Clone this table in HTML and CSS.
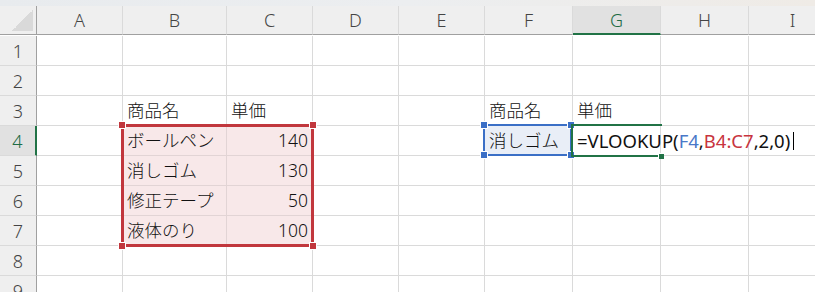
FILE: index.html
```html
<!DOCTYPE html>
<html lang="ja">
<head>
  <meta charset="UTF-8">
  <title>VLOOKUP</title>
  <link rel="stylesheet" href="styles.css">
</head>
<body>
  <div class="sheet">
    <div class="topbar"></div>

    <div class="grid">
      <!-- 列見出し -->
      <div class="corner"><span class="corner-tri"></span></div>
      <div class="colhead">A</div>
      <div class="colhead">B</div>
      <div class="colhead">C</div>
      <div class="colhead">D</div>
      <div class="colhead">E</div>
      <div class="colhead">F</div>
      <div class="colhead current">G</div>
      <div class="colhead">H</div>
      <div class="colhead">I</div>

      <!-- 1 -->
      <div class="rowhead">1</div>
      <div class="cell"></div><div class="cell"></div><div class="cell"></div><div class="cell"></div>
      <div class="cell"></div><div class="cell"></div><div class="cell"></div><div class="cell"></div><div class="cell"></div>

      <!-- 2 -->
      <div class="rowhead">2</div>
      <div class="cell"></div><div class="cell"></div><div class="cell"></div><div class="cell"></div>
      <div class="cell"></div><div class="cell"></div><div class="cell"></div><div class="cell"></div><div class="cell"></div>

      <!-- 3 -->
      <div class="rowhead">3</div>
      <div class="cell"></div>
      <div class="cell">商品名</div>
      <div class="cell">単価</div>
      <div class="cell"></div>
      <div class="cell"></div>
      <div class="cell">商品名</div>
      <div class="cell">単価</div>
      <div class="cell"></div>
      <div class="cell"></div>

      <!-- 4 -->
      <div class="rowhead current">4</div>
      <div class="cell"></div>
      <div class="cell ref-red">ボールペン</div>
      <div class="cell ref-red num">140</div>
      <div class="cell"></div>
      <div class="cell"></div>
      <div class="cell ref-blue">消しゴム</div>
      <div class="cell editing">=VLOOKUP(<span class="c-blue">F4</span>,<span class="c-red">B4:C7</span>,2,0)</div>
      <div class="cell"></div>
      <div class="cell"></div>

      <!-- 5 -->
      <div class="rowhead">5</div>
      <div class="cell"></div>
      <div class="cell ref-red">消しゴム</div>
      <div class="cell ref-red num">130</div>
      <div class="cell"></div><div class="cell"></div><div class="cell"></div>
      <div class="cell"></div><div class="cell"></div><div class="cell"></div>

      <!-- 6 -->
      <div class="rowhead">6</div>
      <div class="cell"></div>
      <div class="cell ref-red">修正テープ</div>
      <div class="cell ref-red num">50</div>
      <div class="cell"></div><div class="cell"></div><div class="cell"></div>
      <div class="cell"></div><div class="cell"></div><div class="cell"></div>

      <!-- 7 -->
      <div class="rowhead">7</div>
      <div class="cell"></div>
      <div class="cell ref-red">液体のり</div>
      <div class="cell ref-red num">100</div>
      <div class="cell"></div><div class="cell"></div><div class="cell"></div>
      <div class="cell"></div><div class="cell"></div><div class="cell"></div>

      <!-- 8 -->
      <div class="rowhead">8</div>
      <div class="cell"></div><div class="cell"></div><div class="cell"></div><div class="cell"></div>
      <div class="cell"></div><div class="cell"></div><div class="cell"></div><div class="cell"></div><div class="cell"></div>

      <!-- 9 -->
      <div class="rowhead">9</div>
      <div class="cell"></div><div class="cell"></div><div class="cell"></div><div class="cell"></div>
      <div class="cell"></div><div class="cell"></div><div class="cell"></div><div class="cell"></div><div class="cell"></div>
    </div>

    <!-- 参照範囲の枠 -->
    <div class="frame frame-red">
      <span class="handle tl"></span><span class="handle tr"></span>
      <span class="handle bl"></span><span class="handle br"></span>
    </div>
    <div class="frame frame-blue">
      <span class="handle tl"></span><span class="handle tr"></span>
      <span class="handle bl"></span><span class="handle br"></span>
    </div>
    <div class="frame frame-active">
      <span class="fill-handle"></span>
    </div>
    <div class="caret"></div>
  </div>
</body>
</html>
```

FILE: styles.css
```css
html, body {
  margin: 0;
  padding: 0;
  background: #fff;
}

body {
  width: 815px;
  height: 292px;
  overflow: hidden;
  font-family: "Noto Sans", "Noto Sans CJK JP", sans-serif;
}

.sheet {
  position: relative;
  width: 815px;
  height: 292px;
}

.topbar {
  height: 6px;
  background: linear-gradient(to right, #e8ebee, #eceef0 50%, #efebe6);
}

.grid {
  display: grid;
  grid-template-columns: 37px 86px 104px 86px 86px 86px 88px 88px 88px 88px;
  grid-auto-rows: 30px;
}

/* 見出し */
.corner,
.colhead,
.rowhead {
  background: #efefef;
  color: #444;
  font-size: 18px;
  font-weight: 300;
  display: flex;
  align-items: center;
  justify-content: center;
  box-sizing: border-box;
}

.corner {
  height: 29px;
  border-right: 1px solid #a0a0a0;
  border-bottom: 1px solid #a0a0a0;
  align-items: flex-end;
  justify-content: flex-end;
  padding: 0 3px 3px 0;
}

.corner-tri {
  width: 21px;
  height: 21px;
  background: linear-gradient(to bottom right, transparent 50%, #d9d9d9 50%);
}

.colhead {
  height: 29px;
  border-right: 1px solid #dadada;
  border-bottom: 1px solid #a0a0a0;
}

.colhead.current {
  background: #e1e1e1;
  color: #1d6b44;
  border-bottom: 2px solid #217346;
}

.rowhead {
  border-right: 1px solid #a0a0a0;
  border-bottom: 1px solid #dadada;
}

.rowhead.current {
  background: #e1e1e1;
  color: #1d6b44;
  border-right: 2px solid #217346;
}

/* セル */
.cell {
  box-sizing: border-box;
  border-right: 1px solid #dadada;
  border-bottom: 1px solid #dadada;
  padding: 0 4px;
  font-size: 17.5px;
  font-weight: 300;
  line-height: 29px;
  color: #111;
  white-space: nowrap;
}

.cell.num {
  text-align: right;
}

.cell.ref-red {
  background: #f8e8e9;
  border-color: #e2d4d5;
}

.cell.ref-blue {
  background: #e9eef7;
}

.cell.editing {
  overflow: visible;
  font-size: 18.5px;
  font-weight: 400;
  position: relative;
  z-index: 1;
}

.c-blue { color: #4a78c8; }
.c-red { color: #c8343e; }

/* 参照枠 */
.frame {
  position: absolute;
  box-sizing: border-box;
  z-index: 2;
}

.frame-red {
  left: 121px;
  top: 124px;
  width: 193px;
  height: 123px;
  border: 3px solid #c1373d;
}

.frame-blue {
  left: 483px;
  top: 124px;
  width: 89px;
  height: 32px;
  border: 2px solid #3b6fc6;
}

.frame-active {
  left: 571px;
  top: 124px;
  width: 91px;
  height: 33px;
  border: 2px solid #217346;
  border-right: none;
}

.handle {
  position: absolute;
  width: 6px;
  height: 6px;
  border: 1px solid #fff;
}

.frame-red .handle { background: #c1373d; }
.frame-blue .handle { background: #3b6fc6; }

.frame-red .tl { left: -6px; top: -6px; }
.frame-red .tr { right: -6px; top: -6px; }
.frame-red .bl { left: -6px; bottom: -6px; }
.frame-red .br { right: -6px; bottom: -6px; }

.frame-blue .tl { left: -5px; top: -5px; }
.frame-blue .tr { right: -5px; top: -5px; }
.frame-blue .bl { left: -5px; bottom: -5px; }
.frame-blue .br { right: -5px; bottom: -5px; }

.fill-handle {
  position: absolute;
  right: -2px;
  bottom: -4px;
  width: 5px;
  height: 5px;
  background: #217346;
  border-left: 1px solid #fff;
  border-top: 1px solid #fff;
}

.caret {
  position: absolute;
  left: 793px;
  top: 132px;
  width: 1px;
  height: 18px;
  background: #000;
  z-index: 3;
}
```
